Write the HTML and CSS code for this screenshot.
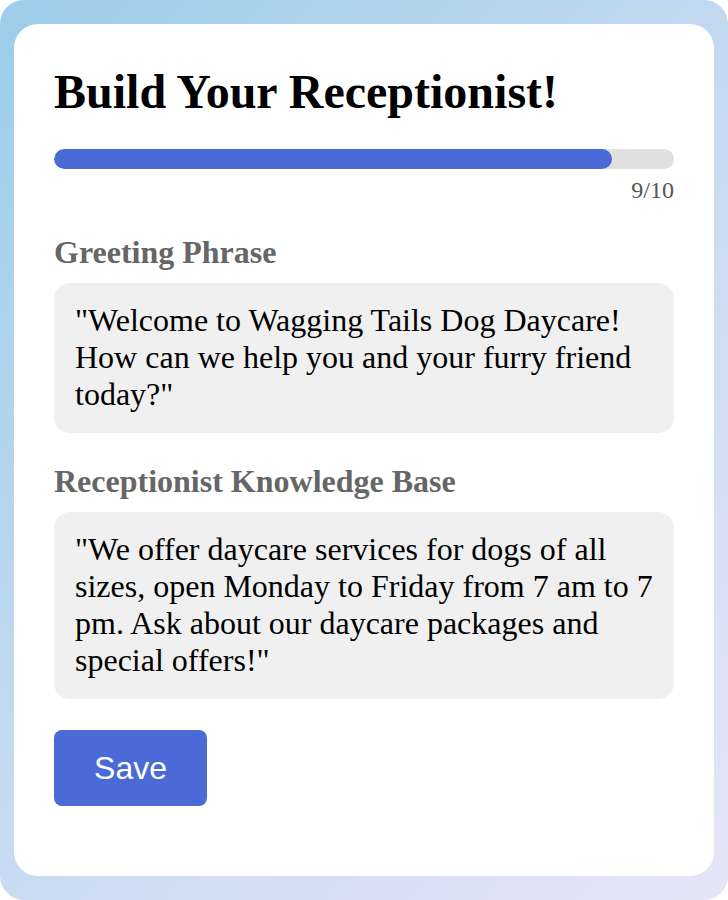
FILE: index.html
```html
<!DOCTYPE html>
<html lang="en">

<head>
    <meta charset="UTF-8">
    <meta name="viewport" content="width=device-width, initial-scale=1.0">
    <title>Build Your Receptionist!</title>
    <link rel="stylesheet" href="styles.css">
</head>

<body>
    <div class="page">
        <div class="card">
            <h1 class="title">Build Your Receptionist!</h1>
            <div class="progress">
                <div class="progress-fill" style="width: 90%"></div>
            </div>
            <p class="step">9/10</p>

            <h2 class="label">Greeting Phrase</h2>
            <div class="field">"Welcome to Wagging Tails Dog Daycare! How can we help you and your furry friend today?"</div>

            <h2 class="label">Receptionist Knowledge Base</h2>
            <div class="field">"We offer daycare services for dogs of all sizes, open Monday to Friday from 7 am to 7 pm. Ask about our daycare packages and special offers!"</div>

            <button class="save-button">Save</button>
        </div>
    </div>
</body>

</html>
```

FILE: styles.css
```css
body {
    margin: 0;
    font-family: "Liberation Serif", "Times New Roman", serif;
}

.page {
    height: 900px;
    box-sizing: border-box;
    padding: 24px 14px;
    border-radius: 24px;
    background: linear-gradient(135deg, #9ccde9 0%, #c6daf1 50%, #e6e5f8 100%);
}

.card {
    height: 100%;
    box-sizing: border-box;
    background-color: #fff;
    border-radius: 24px;
    padding: 40px 40px;
}

.title {
    font-size: 48px;
    margin: 0 0 30px;
    color: #000;
}

.progress {
    height: 20px;
    background-color: #e0e0e0;
    border-radius: 10px;
    overflow: hidden;
}

.progress-fill {
    height: 100%;
    background-color: #4a6ad8;
    border-radius: 10px;
}

.step {
    text-align: right;
    font-size: 24px;
    color: #555;
    margin: 8px 0 0;
}

.label {
    font-size: 32px;
    line-height: 37px;
    color: #666;
    margin: 30px 0 12px;
}

.field {
    background-color: #f0f0f0;
    border-radius: 16px;
    padding: 19px 20px 20px 21px;
    font-size: 32px;
    line-height: 37px;
    color: #000;
}

.save-button {
    margin-top: 31px;
    width: 153px;
    height: 76px;
    border: none;
    border-radius: 8px;
    background-color: #4a6ad8;
    color: #fff;
    font-family: "Liberation Sans", Arial, sans-serif;
    font-size: 32px;
    cursor: pointer;
}
```
